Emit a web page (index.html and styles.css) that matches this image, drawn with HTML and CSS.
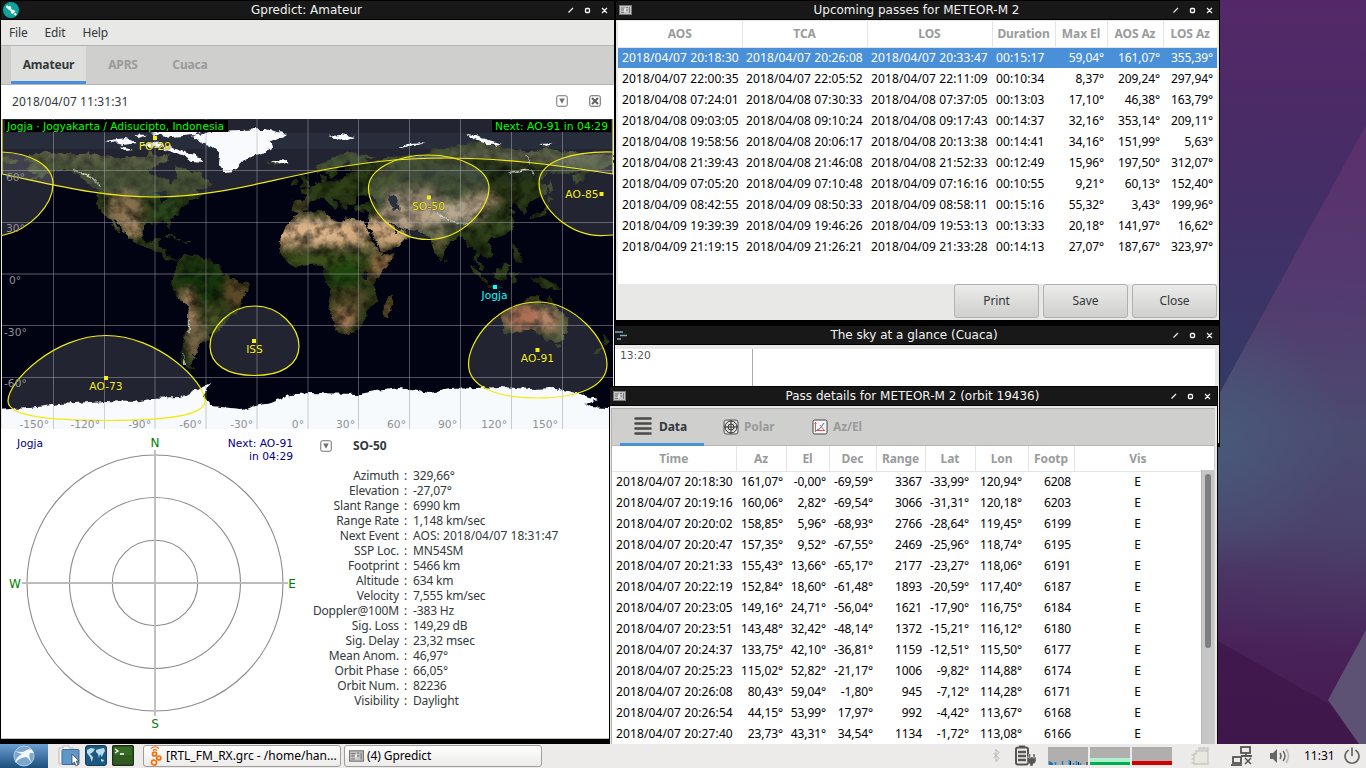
FILE: index.html
```
<!DOCTYPE html>
<html lang="en">
<head>
<meta charset="utf-8">
<title>Gpredict desktop</title>
<link rel="stylesheet" href="styles.css">
</head>
<body>
<svg width="0" height="0" class="defs">
  <symbol id="wm" viewBox="0 0 42 9"><path d="M2.500 6.500L7 2M36 2l5 5M41 2l-5 5" stroke="#fff" stroke-width="1.100" fill="none"/><rect x="19.500" y="2.500" width="4" height="4" rx="1" fill="none" stroke="#fff" stroke-width="1.300"/></symbol>
  <symbol id="radio" viewBox="0 0 13 10"><rect x=".5" y=".5" width="12" height="9" fill="#c4c4c4" stroke="#777"/><path d="M2 3h4M2 5h3M2 7.500h3M7 2.500h2M7 5h2M10.500 2v6" stroke="#666" stroke-width=".8"/><path d="M6 3v4" stroke="#fff"/></symbol>
  <symbol id="drop" viewBox="0 0 12 12"><rect x=".75" y=".75" width="10.500" height="10.500" rx="1.500" fill="#fff" stroke="#707070"/><path d="M3.200 3.500h5.600L6 8.800z" fill="#707070"/></symbol>
</svg>
<div class="desktop">
  <svg class="wall" viewBox="1216 0 150 744" preserveAspectRatio="none">
    <defs>
      <linearGradient id="w1" x1="0" y1="0" x2="0" y2="1"><stop offset="0" stop-color="#542868"/><stop offset=".25" stop-color="#452d66"/><stop offset=".5" stop-color="#353966"/><stop offset="1" stop-color="#37164a"/></linearGradient>
      <linearGradient id="w2" gradientUnits="userSpaceOnUse" x1="1366" y1="125" x2="1330" y2="744"><stop offset="0" stop-color="#5c2f6c"/><stop offset=".25" stop-color="#54396f"/><stop offset=".5" stop-color="#4b4b70"/><stop offset=".66" stop-color="#4b426b"/><stop offset=".85" stop-color="#49225a"/><stop offset="1" stop-color="#451a50"/></linearGradient>
      <radialGradient id="w3" gradientUnits="userSpaceOnUse" cx="1216" cy="440" r="130"><stop offset="0" stop-color="#48597a"/><stop offset="1" stop-color="#48597a" stop-opacity="0"/></radialGradient>
      <clipPath id="beam"><path d="M1366 125L1216 400V744H1366z"/></clipPath>
    </defs>
    <path d="M1216 0h150v744h-150z" fill="url(#w1)"/>
    <g clip-path="url(#beam)"><path d="M1216 0h150v744h-150z" fill="url(#w2)"/><path d="M1216 300h150v300h-150z" fill="url(#w3)"/></g>
    <path d="M1216 640L1366 725V744H1216z" fill="#3d1548" opacity=".7"/>
    <path d="M1328 700L1366 630V744h-7z" fill="#5d5273"/>
  </svg>

  <section class="win main">
    <header class="title"><svg class="ti" viewBox="0 0 18 18"><circle cx="9" cy="9" r="8" fill="#10a39b"/><path d="M4.500 5l2 2M6 8l2.500-2.500M7.500 7.500l4 4M9.500 12.500l3-3M12.500 12.500l1.500 1.500" stroke="#fff" stroke-width="2.300"/></svg><h1>Gpredict: Amateur</h1><svg class="wb"><use href="#wm"/></svg></header>
    <nav class="menu"><span>File</span><span>Edit</span><span>Help</span></nav>
    <div class="tabs"><b class="on">Amateur</b><b>APRS</b><b>Cuaca</b></div>
    <div class="clock"><span>2018/04/07 11:31:31</span><svg class="i12"><use href="#drop"/></svg><svg class="i12" viewBox="0 0 12 12"><rect x=".75" y=".75" width="10.500" height="10.500" rx="1.500" fill="#fff" stroke="#606060"/><path d="M3 3l6 6M9 3L3 9" stroke="#606060" stroke-width="2"/></svg></div>
    <svg class="map" viewBox="2 119 611 310">
      <defs>
        <filter id="rough" x="0" y="0" width="1" height="1" color-interpolation-filters="sRGB">
          <feTurbulence type="fractalNoise" baseFrequency=".16" numOctaves="4" seed="4" result="n"/>
          <feDisplacementMap in="SourceGraphic" in2="n" scale="6" xChannelSelector="R" yChannelSelector="G" result="d"/>
          <feTurbulence type="fractalNoise" baseFrequency=".09" numOctaves="5" seed="12" result="m"/>
          <feColorMatrix in="m" type="matrix" values="0 0 0 0 .02  0 0 0 0 .03  0 0 0 0 0  0 0 1.500 0 -.58" result="s"/>
          <feComposite in="s" in2="d" operator="in" result="t"/>
          <feMerge><feMergeNode in="d"/><feMergeNode in="t"/></feMerge>
        </filter>
        <filter id="ice" x="-.1" y="-.1" width="1.200" height="1.200" color-interpolation-filters="sRGB"><feTurbulence type="fractalNoise" baseFrequency=".15" numOctaves="3" seed="9"/><feDisplacementMap in="SourceGraphic" scale="6" xChannelSelector="R" yChannelSelector="G"/></filter>
        <filter id="soft" x="-.5" y="-.5" width="2" height="2"><feGaussianBlur stdDeviation="2.500"/></filter>
        <clipPath id="frame"><rect x="2" y="119" width="611" height="310"/></clipPath>
        <clipPath id="land">
          <path d="M-168 66L-162 70-156 71.300-141 69.700-128 70-115 68-108 68-95 68-94 72-88 68-82 69.500-82 66-87 64-94 60-93 58-88 56.500-82 55-80 51.500-79 54.500-77 57-78 62-73 62-68 58.500-64 60-61 56-56 52-60 50-66 50-65 47-61 46-66 44-70 43.500-70 41.500-74 40-76 37-76 35-81 31.500-80 26-82 28-84 30-90 29.500-94 29.500-97 27.500-97.500 22-95 18.500-91 18.500-90 21-87 21-88 16-83 15-83.500 11-79 9.300-77 8-80 7.500-83 8.300-87 12.500-94 16-98 16-105 20-106 23-110 27-113 31-114.500 31.500-112 28-109.500 23-112 25-115 29-117 32.500-121 35-124 40-124 46-123 49-128 51-133 56-140 60-147 61-152 59-158 56-164 54.500-158 58.500-162 59-166 62-161 64.500z"/>
          <path d="M-77 8L-72 12-62 10.500-52 5-50 0-44-2.500-35-6-35-9-39-13-40-21-48-26-49-29-54-34-58-34.500-57-38-62-39-65-42-65-45-68-47-66-48-69-51-68-53-66-55-72-54-75-50-74-44-73-37-71-30-70-18-76-14-81-6-80-2-77 3z"/>
          <path d="M-17 15L-16 21-13 28-9 32-6 36 10 37 11 34 19 30 22 33 32 31 34 28 37 21 43 11.500 51 12 47 5 40-3 39-7 41-15 35-20 35-24 32-29 26-34 18-34.500 15-27 12-18 13-9 9-1 9 4 5 6-4 5-8 4.500-13 8zM44-17L49-12 50-16 47-25 44-25z"/>
          <path d="M-9 37L-9 43-2 43.500-1 46-5 48.500 2 51 8 54 8 57 11 57 10 54 20 54.500 24 59 30 60 22 60.500 25 65.500 22 65.500 17 61 18 59 14 55.500 11 59 5 59 5 62 14 68 25 71 40 67.500 33 66.500 38 64 45 68 60 69 68 68 73 72.500 80 73 100 77 113 74 130 71 140 73 160 70 180 69 180 65 178 63 170 60 163 59 162 55 157 51 156 57 162 61 155 59 142 59 136 54 141 52 140 47 132 43 128 39 129 35.500 126.500 34.500 125 39 121 40.500 118 39 122 37 119 35 122 31 120 26 114 22 108 21.500 106 19 109 12 105 9 101 13 99.500 10 103 4 103.500 1.500 101 3 98.500 8 97.500 16 94 16 91 22 87 21 80 15 80 11 77.500 8 73 17 72 21 67 25 57 26 54 27 50 30 48 30 51 26 52 24 56 26 60 22.500 55 17.500 45 13 43 13 39 21 35 28 36 36.500 28 36.500 27 40 35 42 41 41.500 38 45 38 47 33 45.500 29 45 28 42 26 40.500 23 40 24 38 22 36.500 19 42 13 45.500 18 40 16 38 10 44 4 43.500 0 40-2 37-5 36z"/>
          <path d="M-180 69L-170 66-173 64-180 65zM-5 50L1 51 0 53.500-2 57.500-5 58.500-3 54zM-10 52L-6 52.500-6 55-9 54.500zM-24 65L-18 66.500-14 65-19 63.500zM130 32L136 33.500 140 35 142 39.500 141 41 139 37 133 35.500zM140 42L145 43 142 45.500zM142 46L144 50 143 54 141 52zM80 9L82 7 80 6zM95 5.500L99 3 106-4 105-6 100-1zM105-6.500L114-7.500 114-8.500 106-7.500zM109 1.500L113 3.500 117 7 119 5 116-3.500 111-3zM119 1L125 1.500 121-.5 123-5 120-5zM131-1L138-2 146-6 150-10.500 144-8 138-8 133-4zM120 18L122 18 124 13 126 7 122 7 121 14zM114-22L122-18 129-15 131-12 136-12 136-15 140-17.500 142-11 146-19 153-25 153-31 150-37.500 146-39 140-38 136-34.500 131-31.500 124-33 116-35 114-32zM145-41L148-41 147-43.500zM173-35L178-38 175-41.500zM173-41L171-46 167-46zM-85 22L-80 23-74 20-78 21zM-74 19L-69 19.500-69 18z"/>
        </clipPath>
      </defs>
      <rect x="2" y="119" width="611" height="310" fill="#020312"/>
      <rect x="2" y="133" width="611" height="16" fill="#0a1826" opacity=".5"/>
      <g filter="url(#rough)">
        <rect x="2" y="119" width="611" height="310" fill="none"/>
        <g transform="translate(308 274.500) scale(1.700 -1.726)">
          <g clip-path="url(#land)">
            <rect x="-180" y="-60" width="360" height="145" fill="#2a3917"/>
            <g filter="url(#soft)">
              <ellipse cx="-110" cy="68" rx="55" ry="5" fill="#454a2c"/><ellipse cx="-108" cy="38" rx="11" ry="11" fill="#86704f"/><ellipse cx="-104" cy="27" rx="7" ry="6" fill="#a58862"/><ellipse cx="-83" cy="38" rx="10" ry="8" fill="#29451a"/>
              <ellipse cx="-62" cy="-5" rx="16" ry="13" fill="#19340f"/><ellipse cx="-42" cy="-10" rx="7" ry="10" fill="#5b4a28"/><ellipse cx="-66" cy="-36" rx="6" ry="14" fill="#756344"/><ellipse cx="-71" cy="-19" rx="4" ry="10" fill="#b28b66"/><ellipse cx="-58" cy="-24" rx="7" ry="6" fill="#4e5627"/>
              <rect x="-20" y="16" width="78" height="17" fill="#cfa77d"/><ellipse cx="6" cy="25" rx="20" ry="7" fill="#dcb388"/><rect x="-18" y="4" width="56" height="8" fill="#3c511b"/><ellipse cx="23" cy="0" rx="13" ry="7" fill="#1b4510"/><ellipse cx="44" cy="7" rx="6" ry="7" fill="#a17550"/><ellipse cx="25" cy="-15" rx="12" ry="7" fill="#514a26"/><ellipse cx="21" cy="-26" rx="8" ry="6" fill="#a37752"/><ellipse cx="47" cy="-20" rx="3" ry="7" fill="#7e5a36"/><ellipse cx="37" cy="0" rx="3" ry="4" fill="#765332"/>
              <ellipse cx="62" cy="34" rx="20" ry="8" fill="#a98f70"/><ellipse cx="62" cy="45" rx="18" ry="5" fill="#85765a"/><ellipse cx="86" cy="36" rx="18" ry="6" fill="#b09c80"/><ellipse cx="102" cy="43" rx="12" ry="4" fill="#a0866a"/><ellipse cx="77" cy="20" rx="5" ry="7" fill="#6c6840"/><ellipse cx="112" cy="28" rx="10" ry="8" fill="#31471e"/><ellipse cx="130" cy="69" rx="50" ry="4" fill="#454a2e"/><ellipse cx="100" cy="58" rx="50" ry="5" fill="#24331a"/><ellipse cx="25" cy="50" rx="24" ry="6" fill="#2f4119"/><ellipse cx="-4" cy="40" rx="5" ry="3" fill="#8a7148"/>
              <ellipse cx="128" cy="-25" rx="13" ry="8" fill="#a0593a"/><ellipse cx="141" cy="-26" rx="7" ry="7" fill="#ab734f"/><ellipse cx="149" cy="-31" rx="4" ry="8" fill="#55532d"/>
            </g>
            <path d="M50 37L54 37 53 42 51 46 47 45 49 40zM-92 48L-84 48-82 44-87 42-87 46zM32 1h3v-3h-3z" fill="#071124"/>
            <path d="M-138 61L-128 57-122 51M76 36l8-5 10-2M-73-46v-8M-70-26v-8M118 59l10 2 6-2M128 69l2-5" fill="none" stroke="#d7d7cf" stroke-width=".9"/>
          </g>
        </g>
      </g>
      <g clip-path="url(#frame)"><g fill="#f7fafd" filter="url(#ice)">
        <path d="M193 136l22-5 50-2 22 5-16 7 2 6-10 7-19 6-11 12-8 1-6-9 1-10-8-7-12-5z"/>
        <path d="M150 133l20-4 35 1-10 5-25 2zM104 141l22-3 9 5-11 2zM120 146l14 3-10 1zM142 144l15-2 8 4-16 2zM164 146l12 2 22 8 5 6-12-1-9-6-17-5zM133 134l14 1-7 3zM328 136l13-2 14 3-10 4zM399 149l9-6 18-1-17 4zM466 135l10 1 26 8-12 1-12-4zM540 144l16-1-10 3zM272 161l15-1 2 3-9 2z"/>
        <path d="M-8 410L30 408 60 404 105 401 135 402 150 399 180 398 200 387 210 383 203 396 212 406 240 409 270 403 290 395 308 393 360 394 375 391 400 388 430 393 450 389 500 387 530 389 555 388 580 394 597 399 585 404 590 407 623 409V440H-10z"/>
      </g></g>
      <g stroke="#9a9aa2" stroke-opacity=".5"><path d="M53.500 119v310M104.500 119v310M155 119v310M206 119v310M257 119v310M308 119v310M358.500 119v310M409.500 119v310M460.500 119v310M511.500 119v310M562.500 119v310M2 170.500h611M2 222.500h611M2 325.500h611M2 377.500h611"/><path d="M2 274h611" stroke-width="2" stroke-opacity=".3"/></g>
      <g class="foot" clip-path="url(#frame)">
        <path d="M2 110V174C55 185 100 197 155 197C210 197 255 184 308 173C350 164 395 158 445 158C500 158 550 164 613 174V110z"/>
        <path d="M2 152C30 153 53 165 53 184C53 205 30 230 2 235.500M613 152C575 151 539 160 539 183C539 210 572 237 604 235.500L613 235"/>
        <path d="M428 155C462 155 489 170 489 188C489 209 462 239.500 428 239.500C395 239.500 368.500 210 368.500 188C368.500 170 395 155 428 155z"/>
        <path d="M254.500 306C280 306 299 328 299 346C299 365 281 375.500 254.500 375.500C228 375.500 210 365 210 346C210 328 230 306 254.500 306z"/>
        <path d="M537.500 302C575 302 607 340 607 364C607 386 580 398 537.500 398C495 398 468.500 386 468.500 364C468.500 340 498 302 537.500 302z"/>
        <path d="M106 335.500C157 335.500 205 381 205 401C205 416 165 420.500 106 420.500C48 420.500 8 416 8 401C8 381 55 335.500 106 335.500z"/>
      </g>
      <g class="deg"><text x="6" y="181">60°</text><text x="6" y="232">30°</text><text x="9" y="284">0°</text><text x="4" y="336">-30°</text><text x="4" y="387">-60°</text>
        <g text-anchor="end"><text x="49" y="428">-150°</text><text x="100" y="428">-120°</text><text x="151" y="428">-90°</text><text x="202" y="428">-60°</text><text x="253" y="428">-30°</text><text x="304" y="428">0°</text><text x="355" y="428">30°</text><text x="406" y="428">60°</text><text x="457" y="428">90°</text><text x="507" y="428">120°</text><text x="558" y="428">150°</text></g></g>
      <g class="sat"><path d="M153 136h4v4h-4zM427 195.500h4v4h-4zM599.500 192h4v4h-4zM252 339h4v4h-4zM535.500 348h4v4h-4zM104 376h4v4h-4z"/>
        <g text-anchor="middle"><text x="155" y="150">FO-29</text><text x="428.500" y="210">SO-50</text><text x="582" y="198">AO-85</text><text x="254.500" y="353">ISS</text><text x="537.500" y="362">AO-91</text><text x="106" y="390">AO-73</text></g></g>
      <g fill="#0ff"><path d="M493 285h4v4h-4z"/><text x="494.500" y="299" text-anchor="middle">Jogja</text></g>
      <path d="M5 120h223v12H5zM492 120h119v12H492z"/>
      <g fill="#0f0"><text x="7" y="130" textLength="217">Jogja · Jogyakarta / Adisucipto, Indonesia</text><text x="495" y="130" textLength="113">Next: AO-91 in 04:29</text></g>
    </svg>
    <div class="lower">
      <svg class="polar" viewBox="2 429 306 309">
        <g fill="none" stroke="#8c8c8c" stroke-width="1.100"><circle cx="155" cy="583" r="128"/><circle cx="155" cy="583" r="85.500"/><circle cx="155" cy="583" r="42.700"/></g>
        <path d="M155 450v266M22 583h266" stroke="#bcbcbc" stroke-width="1.800"/>
        <g fill="#007f00" font-size="12" text-anchor="middle"><text x="155" y="447">N</text><text x="155" y="728">S</text><text x="15" y="588">W</text><text x="292" y="588">E</text></g>
        <g fill="#00007f"><text x="17" y="447">Jogja</text><text x="293" y="447" text-anchor="end">Next: AO-91</text><text x="293" y="460" text-anchor="end">in 04:29</text></g>
      </svg>
      <div class="info">
        <div class="ihead"><svg class="i12"><use href="#drop"/></svg><b>SO-50</b></div>
        <dl>
          <dt>Azimuth</dt><dd>329,66°</dd><dt>Elevation</dt><dd>-27,07°</dd><dt>Slant Range</dt><dd>6990 km</dd><dt>Range Rate</dt><dd>1,148 km/sec</dd><dt>Next Event</dt><dd class="ev">AOS: 2018/04/07 18:31:47</dd><dt>SSP Loc.</dt><dd>MN54SM</dd><dt>Footprint</dt><dd>5466 km</dd><dt>Altitude</dt><dd>634 km</dd><dt>Velocity</dt><dd>7,555 km/sec</dd><dt>Doppler@100M</dt><dd>-383 Hz</dd><dt>Sig. Loss</dt><dd>149,29 dB</dd><dt>Sig. Delay</dt><dd>23,32 msec</dd><dt>Mean Anom.</dt><dd>46,97°</dd><dt>Orbit Phase</dt><dd>66,05°</dd><dt>Orbit Num.</dt><dd>82236</dd><dt>Visibility</dt><dd>Daylight</dd>
        </dl>
      </div>
    </div>
  </section>

  <section class="win up">
    <header class="title"><svg class="ri"><use href="#radio"/></svg><h1>Upcoming passes for METEOR-M 2</h1><svg class="wb"><use href="#wm"/></svg></header>
    <div class="list"><table>
      <colgroup><col class="c124"><col class="c125"><col class="c125"><col class="c63"><col class="c52"><col class="c56"><col class="c54"></colgroup>
      <tr><th>AOS</th><th>TCA</th><th>LOS</th><th>Duration</th><th>Max El</th><th>AOS Az</th><th>LOS Az</th></tr>
      <tr class="sel"><td>2018/04/07 20:18:30</td><td>2018/04/07 20:26:08</td><td>2018/04/07 20:33:47</td><td>00:15:17</td><td>59,04°</td><td>161,07°</td><td>355,39°</td></tr>
      <tr><td>2018/04/07 22:00:35</td><td>2018/04/07 22:05:52</td><td>2018/04/07 22:11:09</td><td>00:10:34</td><td>8,37°</td><td>209,24°</td><td>297,94°</td></tr>
      <tr><td>2018/04/08 07:24:01</td><td>2018/04/08 07:30:33</td><td>2018/04/08 07:37:05</td><td>00:13:03</td><td>17,10°</td><td>46,38°</td><td>163,79°</td></tr>
      <tr><td>2018/04/08 09:03:05</td><td>2018/04/08 09:10:24</td><td>2018/04/08 09:17:43</td><td>00:14:37</td><td>32,16°</td><td>353,14°</td><td>209,11°</td></tr>
      <tr><td>2018/04/08 19:58:56</td><td>2018/04/08 20:06:17</td><td>2018/04/08 20:13:38</td><td>00:14:41</td><td>34,16°</td><td>151,99°</td><td>5,63°</td></tr>
      <tr><td>2018/04/08 21:39:43</td><td>2018/04/08 21:46:08</td><td>2018/04/08 21:52:33</td><td>00:12:49</td><td>15,96°</td><td>197,50°</td><td>312,07°</td></tr>
      <tr><td>2018/04/09 07:05:20</td><td>2018/04/09 07:10:48</td><td>2018/04/09 07:16:16</td><td>00:10:55</td><td>9,21°</td><td>60,13°</td><td>152,40°</td></tr>
      <tr><td>2018/04/09 08:42:55</td><td>2018/04/09 08:50:33</td><td>2018/04/09 08:58:11</td><td>00:15:16</td><td>55,32°</td><td>3,43°</td><td>199,96°</td></tr>
      <tr><td>2018/04/09 19:39:39</td><td>2018/04/09 19:46:26</td><td>2018/04/09 19:53:13</td><td>00:13:33</td><td>20,18°</td><td>141,97°</td><td>16,62°</td></tr>
      <tr><td>2018/04/09 21:19:15</td><td>2018/04/09 21:26:21</td><td>2018/04/09 21:33:28</td><td>00:14:13</td><td>27,07°</td><td>187,67°</td><td>323,97°</td></tr>
    </table></div>
    <div class="btns"><button>Print</button><button>Save</button><button>Close</button></div>
  </section>

  <section class="win sky">
    <header class="title"><svg class="si" viewBox="0 0 13 10"><path d="M0 2h8M5 5.500h7M2 9h4" stroke="#7fa6bb" stroke-width="1.600"/></svg><h1>The sky at a glance (Cuaca)</h1><svg class="wb"><use href="#wm"/></svg></header>
    <div class="skyb"><span>13:20</span></div>
  </section>

  <section class="win det">
    <header class="title"><svg class="ri"><use href="#radio"/></svg><h1>Pass details for METEOR-M 2 (orbit 19436)</h1><svg class="wb"><use href="#wm"/></svg></header>
    <div class="dbody">
      <div class="dtabs">
        <b class="on"><svg viewBox="0 0 18 18"><path d="M1.500 1.500h15M1.500 6.500h15M1.500 11.500h15M1.500 16.500h15" stroke="#4a4a4a" stroke-width="2.600" stroke-linecap="round"/></svg>Data</b>
        <b><svg viewBox="0 0 18 18"><rect x="2" y="2" width="14" height="14" rx="2" fill="#e0e0e0" stroke="#555"/><circle cx="9" cy="9" r="6" fill="none" stroke="#333"/><circle cx="9" cy="9" r="3" fill="none" stroke="#333"/><path d="M9 2v14M2 9h14" stroke="#333"/></svg>Polar</b>
        <b><svg viewBox="0 0 18 18"><rect x="2" y="2" width="14" height="14" rx="1.500" fill="#f6f6f6" stroke="#444"/><path d="M4.500 4v10M3.500 5.500h2M4 12.500h10" stroke="#d55"/><path d="M6 12l3-1.500L13 5" stroke="#37a" fill="none"/><path d="M9 7l4 5" stroke="#d66" fill="none"/></svg>Az/El</b>
      </div>
      <div class="dl"><table>
        <colgroup><col class="d1"><col class="d2"><col class="d3"><col class="d4"><col class="d5"><col class="d6"><col class="d7"><col class="d8"><col class="d9"></colgroup>
        <tr><th>Time</th><th>Az</th><th>El</th><th>Dec</th><th>Range</th><th>Lat</th><th>Lon</th><th>Footp</th><th>Vis</th></tr>
        <tr><td>2018/04/07 20:18:30</td><td>161,07°</td><td>-0,00°</td><td>-69,59°</td><td>3367</td><td>-33,99°</td><td>120,94°</td><td>6208</td><td>E</td></tr>
        <tr><td>2018/04/07 20:19:16</td><td>160,06°</td><td>2,82°</td><td>-69,54°</td><td>3066</td><td>-31,31°</td><td>120,18°</td><td>6203</td><td>E</td></tr>
        <tr><td>2018/04/07 20:20:02</td><td>158,85°</td><td>5,96°</td><td>-68,93°</td><td>2766</td><td>-28,64°</td><td>119,45°</td><td>6199</td><td>E</td></tr>
        <tr><td>2018/04/07 20:20:47</td><td>157,35°</td><td>9,52°</td><td>-67,55°</td><td>2469</td><td>-25,96°</td><td>118,74°</td><td>6195</td><td>E</td></tr>
        <tr><td>2018/04/07 20:21:33</td><td>155,43°</td><td>13,66°</td><td>-65,17°</td><td>2177</td><td>-23,27°</td><td>118,06°</td><td>6191</td><td>E</td></tr>
        <tr><td>2018/04/07 20:22:19</td><td>152,84°</td><td>18,60°</td><td>-61,48°</td><td>1893</td><td>-20,59°</td><td>117,40°</td><td>6187</td><td>E</td></tr>
        <tr><td>2018/04/07 20:23:05</td><td>149,16°</td><td>24,71°</td><td>-56,04°</td><td>1621</td><td>-17,90°</td><td>116,75°</td><td>6184</td><td>E</td></tr>
        <tr><td>2018/04/07 20:23:51</td><td>143,48°</td><td>32,42°</td><td>-48,14°</td><td>1372</td><td>-15,21°</td><td>116,12°</td><td>6180</td><td>E</td></tr>
        <tr><td>2018/04/07 20:24:37</td><td>133,75°</td><td>42,10°</td><td>-36,81°</td><td>1159</td><td>-12,51°</td><td>115,50°</td><td>6177</td><td>E</td></tr>
        <tr><td>2018/04/07 20:25:23</td><td>115,02°</td><td>52,82°</td><td>-21,17°</td><td>1006</td><td>-9,82°</td><td>114,88°</td><td>6174</td><td>E</td></tr>
        <tr><td>2018/04/07 20:26:08</td><td>80,43°</td><td>59,04°</td><td>-1,80°</td><td>945</td><td>-7,12°</td><td>114,28°</td><td>6171</td><td>E</td></tr>
        <tr><td>2018/04/07 20:26:54</td><td>44,15°</td><td>53,99°</td><td>17,97°</td><td>992</td><td>-4,42°</td><td>113,67°</td><td>6168</td><td>E</td></tr>
        <tr><td>2018/04/07 20:27:40</td><td>23,73°</td><td>43,31°</td><td>34,54°</td><td>1134</td><td>-1,72°</td><td>113,08°</td><td>6166</td><td>E</td></tr>
      </table><div class="sb"><i></i></div></div>
    </div>
  </section>

  <footer class="bar">
    <div class="start"><svg viewBox="0 0 24 24"><circle cx="12" cy="12" r="10" fill="#7ba6cd" stroke="#b5d0e6"/><path d="M3 7Q10 9 13 7Q17 4 20 6L22 9L18 9Q16 12 20 20Q16 13 14 13Q7 14 3 19Q4 13 10 10Q6 9 3 7z" fill="#f4f8fb"/></svg></div>
    <div class="ql">
      <svg viewBox="0 0 22 22"><path d="M1 3h4V1h6v2h4v16H1z" fill="#f4f4f4" stroke="#bbb"/><rect x="4" y="4.500" width="17" height="15" rx="1" fill="#5f98c8" stroke="#3b6b99"/><path d="M14 9v10l2.500-2 1.500 4 2-1-1.700-4H21z" fill="#fff" stroke="#333" stroke-width=".7"/></svg>
      <svg viewBox="0 0 22 22"><rect x=".5" y=".5" width="21" height="20" rx="2.500" fill="#1d587f" stroke="#123c5c"/><path d="M2 5l4-2 4 1-2 3-3 2 3 3-1 5-2-5-3-4zM11 5l3-1 5-1 1 3-2 3-1 3-2-3-1 4-1-4-2-2zM16 14l3 1-1 2-2-1z" fill="#b9dcec"/></svg>
      <svg viewBox="0 0 22 22"><rect x=".7" y=".7" width="20.600" height="19.600" rx="1.500" fill="#356b22" stroke="#1d2d1b" stroke-width="1.500"/><path d="M2 10h18v9H2z" fill="#2f5a20"/><path d="M3 4l3 2-3 2M8 9h4" fill="none" stroke="#fff" stroke-width="1.300"/></svg>
    </div>
    <div class="task t1"><svg viewBox="0 0 12 20"><g fill="none" stroke="#ff6a00" stroke-width="1.700"><circle cx="4.500" cy="8" r="2"/><circle cx="8.800" cy="12" r="2"/><circle cx="4" cy="16.500" r="2.500"/><path d="M1 2.500q4-3.500 8 0M2.700 4.600q2.300-2 4.600 0" stroke-width="1.200"/></g></svg><span>[RTL_FM_RX.grc - /home/han...</span></div>
    <div class="task t2"><svg class="ri2"><use href="#radio"/></svg><span>(4) Gpredict</span></div>
    <svg class="tray" viewBox="990 744 310 24">
      <path d="M993.500 753l5.500 5.500-3 3v-12l3 3-5.500 5.500" fill="none" stroke="#b5b5b3"/>
      <path d="M1019 745.500h6v2h-6z" fill="#555"/><rect x="1016" y="747.500" width="12" height="17" rx="2" fill="none" stroke="#555" stroke-width="2"/><path d="M1018 752h8M1018 756h8M1018 760h8" stroke="#555" stroke-width="2.300"/><path d="M1027 757h9v4q-1 3-3 3v2h-3v-2q-3-1-3-3zM1028.500 754h2v4h-2zM1033 754h2v4h-2z" fill="#555" stroke="#eee" stroke-width=".4"/>
      <path d="M1048 747h40v18h-40zM1090 747h40v18h-40zM1132 747h40v18h-40z" fill="#b1afae"/>
      <path d="M1049.500 765v-4M1052.500 765v-2M1055.500 765v-3M1062.500 765v-4M1069.500 765v-5M1073.500 765v-2M1076.500 765v-4M1080.500 765v-2" stroke="#1689d0" stroke-width="1.600"/><path d="M1051 765v-3M1070.500 765v-4M1078.500 765v-3M1087 765v-3" stroke="#123"/>
      <path d="M1090 758h40v4h-40z" fill="#b0f0ce"/><path d="M1090 762h40v3h-40z" fill="#00b050"/><path d="M1132 761h40v4h-40z" fill="#d40000"/>
      <path d="M1194 764v-10h2v-3h3v-3h2v3h2v-3h2v3h2v-3h1v16zM1191.500 755h3M1191.500 759h3M1191.500 763h3" fill="#e8e7e2" stroke="#c9c8c2" stroke-width="1.300"/>
      <g fill="none" stroke="#555" stroke-width="1.800"><rect x="1241" y="747" width="9" height="6"/><path d="M1241 756h11M1246 753v3"/><rect x="1233" y="757" width="8" height="6"/><path d="M1231 765h11"/><path d="M1245 758l6 6M1251 758l-6 6" stroke-width="1.500"/></g>
      <path d="M1270 753h3l4-4v14l-4-4h-3z" fill="#666"/><g fill="none" stroke="#666" stroke-width="1.500"><path d="M1280 753q2 3 0 6"/><path d="M1283 751q4 5 0 10"/><path d="M1286 749q5 7 0 14" stroke="#bbb"/></g>
    </svg>
    <span class="time">11:31</span>
    <svg class="pw" viewBox="0 0 18 18"><path d="M5 3.500a7 7 0 1 0 8 0M9 1v7.500" fill="none" stroke="#666" stroke-width="1.700" stroke-linecap="round"/></svg>
  </footer>
</div>
</body>
</html>
```
FILE: styles.css
```
* { box-sizing: border-box; }
body { margin: 0; font: 12px/15px "Noto Sans", "Open Sans", sans-serif; color: #33393b; }
.defs { position: absolute; }
svg { display: block; }
.desktop { position: relative; width: 1366px; height: 768px; overflow: hidden; background: #000; }
.wall { position: absolute; left: 1216px; top: 0; width: 150px; height: 744px; }
.win { position: absolute; display: flex; flex-direction: column; background: #e8e8e7; border: 1px solid #000; }
.title { display: flex; align-items: center; height: 19px; flex: none; background: #181818; border-bottom: 1px solid #000; color: #f2f2f2; position: relative; }
.title h1 { flex: 1; margin: 0; padding-right: 2px; text-align: center; font: 12px/18px "DejaVu Sans", sans-serif; }
.title svg:first-child { position: absolute; }
.ti { width: 18px; height: 18px; left: 1px; }
.ri { width: 13px; height: 10px; left: 3px; }
.si { width: 13px; height: 10px; left: 0; }
.wb { position: absolute; right: 6px; width: 42px; height: 9px; }

.main { left: 0; top: 0; width: 615px; height: 744px; border-width: 1px 1px 5px 1px; }
.menu { display: flex; gap: 17px; height: 26px; flex: none; padding: 5px 8px; border-bottom: 1px solid #b5b5b4; letter-spacing: -.15px; }
.tabs { display: flex; height: 39px; flex: none; padding-left: 10px; background: #cfcfce; border-bottom: 1px solid #b5b5b4; letter-spacing: -.15px; }
.tabs b { color: #999b9b; text-align: center; line-height: 37px; width: 75px; }
.tabs b + b { width: 74px; }
.tabs b + b + b { width: 60px; }
.tabs b.on { color: #33393b; background: #dededd; border-bottom: 3px solid #4a90d9; }
.clock { display: flex; align-items: center; flex: none; height: 34px; padding: 0 13px 2px 11px; background: #fff; letter-spacing: .1px; }
.clock span { flex: 1; }
.clock svg + svg { margin-left: 21px; }
.i12 { width: 12px; height: 12px; }
.map { width: 611px; height: 310px; margin-left: 1px; flex: none; overflow: visible; }
.map text, .polar text { font-family: "DejaVu Sans", sans-serif; font-size: 10.7px; }
.polar g[font-size] text { font-size: 12px; }
.foot path { fill: rgba(255,255,255,.135); stroke: #f0ec10; stroke-width: 1.2; }
.deg { fill: #909096; }
.sat { fill: #f5ef1a; }
.sat text { paint-order: stroke; stroke: rgba(20,20,20,.5); stroke-width: 1px; }
.lower { display: flex; flex: 1; min-height: 0; background: #fff; border-bottom: 1px solid #bbc5bb; padding-left: 1px; }
.polar { width: 306px; height: 309px; }
.info { padding-top: 9px; }
.ihead { display: flex; align-items: center; gap: 21px; height: 15px; padding-left: 12px; margin-bottom: 15px; }
dl { margin: 0; display: grid; grid-template-columns: 99px 200px; column-gap: 6px; line-height: 15px; letter-spacing: -.15px; }
dt { text-align: right; white-space: nowrap; margin-left: -6px; }
dt::after { content: " :"; white-space: pre; margin-left: 2px; }
dd { margin: 0; white-space: nowrap; }
.ev { letter-spacing: .05px; }

.up { left: 615px; top: 0; width: 605px; height: 325px; border-bottom-width: 5px; }
.list { margin: 1px 2px 0 2px; background: #fff; height: 263px; flex: none; }
table { border-collapse: collapse; table-layout: fixed; }
th { height: 26px; padding: 0; color: #999b9b; border-right: 1px solid #e4e4e4; border-bottom: 1px solid #e4e4e4; font-weight: bold; white-space: nowrap; letter-spacing: -.1px; }
th:last-child { border-right: 0; }
td { height: 21px; padding: 0 3px 0 0; text-align: right; color: #000; white-space: nowrap; letter-spacing: -.1px; }
td:first-child { text-align: left; padding-left: 4px; letter-spacing: .12px; }
.list table { width: 599px; }
.list td:nth-child(-n+4) { text-align: left; padding-left: 4px; letter-spacing: .12px; }
.list td:last-child { padding-right: 4px; }
.sel td { background: #4a90d9; color: #fff; }
.c124 { width: 124px; } .c125 { width: 125px; } .c63 { width: 63px; } .c52 { width: 52px; } .c56 { width: 56px; } .c54 { width: 54px; }
.btns { display: flex; justify-content: flex-end; gap: 4px; padding-right: 2px; }
button { width: 85px; height: 34px; padding: 0 0 2px; border: 1px solid #b1b1af; border-radius: 3px; background: linear-gradient(#ebebea, #cfcfcd); font: 12px "Noto Sans", sans-serif; color: #33393b; letter-spacing: -.1px; }

.sky { left: 614px; top: 325px; width: 606px; height: 122px; border-bottom-width: 4px; }
.sky .title h1 { padding-right: 6px; }
.skyb { flex: 1; margin: 4px 4px 0 0; background: linear-gradient(90deg, transparent 137px, #aaa 137px, #aaa 138px, transparent 138px) #fff; font: 10.7px/13px "DejaVu Sans", sans-serif; color: #555; padding-left: 5px; }

.det { left: 609px; top: 386px; width: 609px; height: 362px; }
.dbody { margin: 2px 2px 0 1px; border: 1px solid #b1b1af; border-right-color: #cfcfcd; background: #fff; flex: 1; }
.dtabs { display: flex; height: 37px; background: #cfcfcd; border-bottom: 1px solid #b5b5b4; padding-left: 8px; }
.dtabs b { display: flex; align-items: center; gap: 7px; padding: 0 17px 2px 14px; height: 37px; color: #999b9b; letter-spacing: -.1px; }
.dtabs b.on { width: 84px; padding: 0 0 0 14px; color: #33393b; border-bottom: 3px solid #4a90d9; }
.dtabs b + b { width: 89px; padding: 0 0 2px 18px; gap: 4px; }
.dtabs svg { width: 18px; height: 18px; flex: none; }
.dl { display: flex; }
.dl table { width: 589px; flex: none; align-self: flex-start; }
.d1 { width: 124px; } .d2 { width: 50px; } .d3 { width: 43px; } .d4 { width: 47px; } .d5 { width: 49px; } .d6 { width: 50px; } .d7 { width: 53px; } .d8 { width: 46px; } .d9 { width: 127px; }
.dl td:nth-child(6), .dl td:nth-child(7) { padding-right: 6px; }
.dl td:last-child { text-align: center; padding: 0; }
.dl th { height: 25px; }
.sb { width: 14px; height: 290px; margin-top: 24px; background: #c5c6c5; border-left: 1px solid #b5b5b4; padding: 4px 3px; }
.sb i { display: block; width: 6px; height: 174px; border-radius: 3px; background: #7b7f80; }

.bar { position: absolute; left: 0; top: 744px; width: 1366px; height: 24px; display: flex; align-items: center; background: #edebea; color: #000; }
.start { width: 48px; height: 24px; padding-left: 12px; background: linear-gradient(#6c9fd2, #1b4f7d); }
.start svg { width: 24px; height: 24px; }
.ql { display: flex; gap: 5px; padding-left: 10px; width: 95px; }
.ql svg { width: 22px; height: 22px; }
.task { display: flex; align-items: center; height: 22px; width: 198px; padding-bottom: 1px; border: 1px solid #a09e9c; border-radius: 3px; background: linear-gradient(#fff, #ecebea); white-space: nowrap; }
.t1 { padding-left: 6px; gap: 4px; }
.t1 svg { width: 12px; height: 20px; }
.t2 { margin-left: 3px; padding-left: 4px; gap: 3px; letter-spacing: -.1px; }
.ri2 { width: 15px; height: 12px; }
.tray { width: 310px; height: 24px; margin-left: 448px; }
.time { width: 38px; padding-left: 4px; padding-bottom: 1px; }
.pw { width: 18px; height: 18px; margin-left: 5px; }
```
